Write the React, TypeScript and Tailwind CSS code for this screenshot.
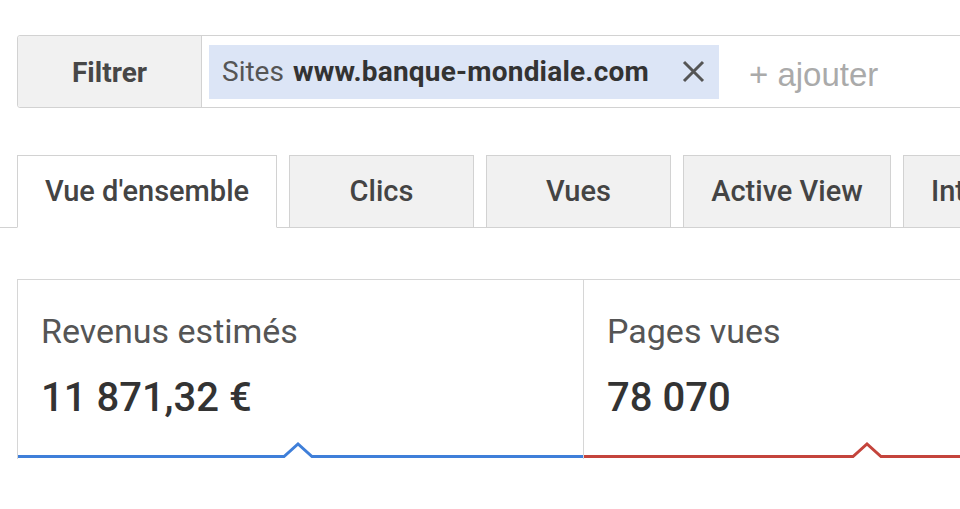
const tabs = [
  { label: "Vue d'ensemble", w: "w-[260px]", active: true },
  { label: "Clics", w: "w-[185px]", active: false },
  { label: "Vues", w: "w-[185px]", active: false },
  { label: "Active View", w: "w-[208px]", active: false },
  { label: "Intérêts", w: "w-[200px]", active: false, clip: true },
];

function Trend({ width, apex, color }: { width: number; apex: number; color: string }) {
  const pts = `0,15.5 ${apex - 14},15.5 ${apex},3 ${apex + 14},15.5 ${width},15.5`;
  return (
    <svg width={width} height="18" className="block">
      <polyline points={pts} fill="none" stroke={color} strokeWidth="3" />
    </svg>
  );
}

function Stat({ label, value, apex, color, w, border }: { label: string; value: string; apex: number; color: string; w: number; border?: boolean }) {
  return (
    <div className={`shrink-0 flex flex-col ${border ? "border-l border-[#d6d6d6]" : ""}`} style={{ width: w }}>
      <div className="pl-[23px] pt-[32px] flex flex-col">
        <span className="text-[34px] leading-[38px] text-[#555]">{label}</span>
        <span className="mt-[24px] text-[40px] leading-[48px] font-medium text-[#333]">{value}</span>
      </div>
      <div className="mt-[19px]">
        <Trend width={w} apex={apex} color={color} />
      </div>
    </div>
  );
}

export default function App() {
  return (
    <main className="w-[960px] h-[509px] overflow-hidden bg-white font-['Roboto',sans-serif]">
      <div id="filter" className="pt-[35px] pl-[17px]">
        <div className="flex h-[73px] w-[1000px] border border-[#d2d2d2] rounded-[3px]">
          <div className="w-[184px] shrink-0 bg-[#f1f1f1] border-r border-[#d2d2d2] rounded-l-[3px] flex items-center justify-center pt-[2px] text-[28px] font-bold text-[#474747]">
            Filtrer
          </div>
          <div className="flex items-center pl-[7px]">
            <div className="h-[54px] w-[510px] bg-[#dce5f6] flex items-center pl-[13px] text-[28px] whitespace-nowrap">
              <span className="text-[#555]">Sites</span>
              <span className="ml-[9px] font-bold tracking-[0.2px] text-[#333]">www.banque-mondiale.com</span>
              <svg width="23" height="23" viewBox="0 0 23 23" className="ml-[33px]">
                <path d="M2 2 L21 21 M21 2 L2 21" stroke="#555" strokeWidth="3" />
              </svg>
            </div>
            <span className="ml-[30px] pt-[6px] text-[33px] text-[#aaa] font-['Liberation_Sans',sans-serif]">+ ajouter</span>
          </div>
        </div>
      </div>

      <div id="tabs" className="mt-[47px] pl-[17px] flex gap-[12px] border-b border-[#d2d2d2] h-[73px]">
        {tabs.map((t) => (
          <div
            key={t.label}
            className={`${t.w} shrink-0 h-[73px] border border-[#d2d2d2] flex items-center text-[29px] font-medium text-[#444] whitespace-nowrap ${
              t.clip ? "justify-start pl-[27px]" : "justify-center"
            } ${t.active ? "bg-white border-b-white" : "bg-[#f1f1f1]"}`}
          >
            {t.label}
          </div>
        ))}
      </div>

      <div id="stats" className="mt-[51px] ml-[17px] flex border-t border-l border-[#d6d6d6]">
        <Stat label="Revenus estimés" value="11 871,32 €" apex={280} color="#3f7fd9" w={565} />
        <Stat label="Pages vues" value="78 070" apex={283} color="#c4443c" w={600} border />
      </div>
    </main>
  );
}
